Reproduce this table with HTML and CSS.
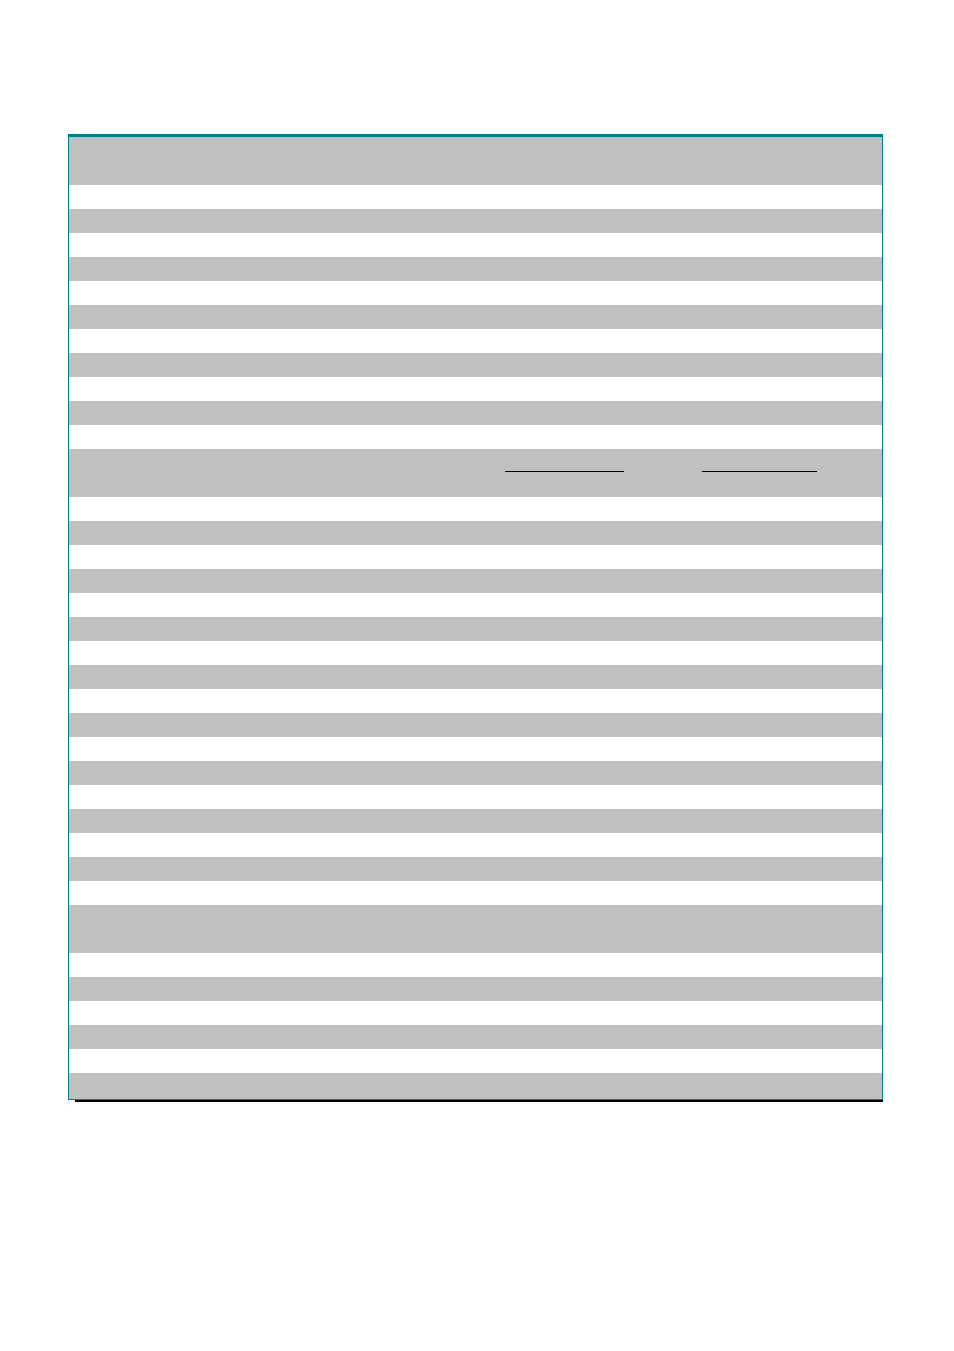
FILE: index.html
```html
<!DOCTYPE html>
<html lang="en">
<head>
<meta charset="utf-8">
<title>Table</title>
<link rel="stylesheet" href="styles.css">
</head>
<body>
<div class="page">
  <div class="sheet">
    <div class="row tall gray"></div>
    <div class="row"></div><div class="row gray"></div>
    <div class="row"></div><div class="row gray"></div>
    <div class="row"></div><div class="row gray"></div>
    <div class="row"></div><div class="row gray"></div>
    <div class="row"></div><div class="row gray"></div>
    <div class="row"></div>
    <div class="row tall gray totals">
      <span class="rule rule-a"></span>
      <span class="rule rule-b"></span>
    </div>
    <div class="row"></div><div class="row gray"></div>
    <div class="row"></div><div class="row gray"></div>
    <div class="row"></div><div class="row gray"></div>
    <div class="row"></div><div class="row gray"></div>
    <div class="row"></div><div class="row gray"></div>
    <div class="row"></div><div class="row gray"></div>
    <div class="row"></div><div class="row gray"></div>
    <div class="row"></div><div class="row gray"></div>
    <div class="row"></div>
    <div class="row tall gray"></div>
    <div class="row"></div><div class="row gray"></div>
    <div class="row"></div><div class="row gray"></div>
    <div class="row"></div><div class="row gray last"></div>
  </div>
  <div class="underline"></div>
</div>
</body>
</html>
```

FILE: styles.css
```css
html, body {
  margin: 0;
  padding: 0;
  background: #ffffff;
  font-family: "Liberation Sans", Arial, sans-serif;
}

.page {
  padding: 134px 0 0 68px;
}

.sheet {
  width: 813px;
  border-top: 3px solid #008080;
  border-left: 1px solid #008080;
  border-right: 1px solid #008080;
  border-bottom: 1px solid #008080;
  display: flex;
  flex-direction: column;
}

.row {
  height: 24px;
  background: #ffffff;
}

.row.gray {
  background: #c0c0c0;
}

.row.tall {
  height: 48px;
}

.row.last {
  height: 26px;
}

.totals {
  display: flex;
  align-items: flex-start;
  padding: 22px 0 0 436px;
  box-sizing: border-box;
  gap: 78px;
}

.rule {
  display: block;
  height: 0;
  border-top: 1px solid #000000;
}

.rule-a {
  width: 119px;
}

.rule-b {
  width: 115px;
}

.underline {
  margin-left: 7px;
  width: 808px;
  height: 2px;
  background: #000000;
}
```
